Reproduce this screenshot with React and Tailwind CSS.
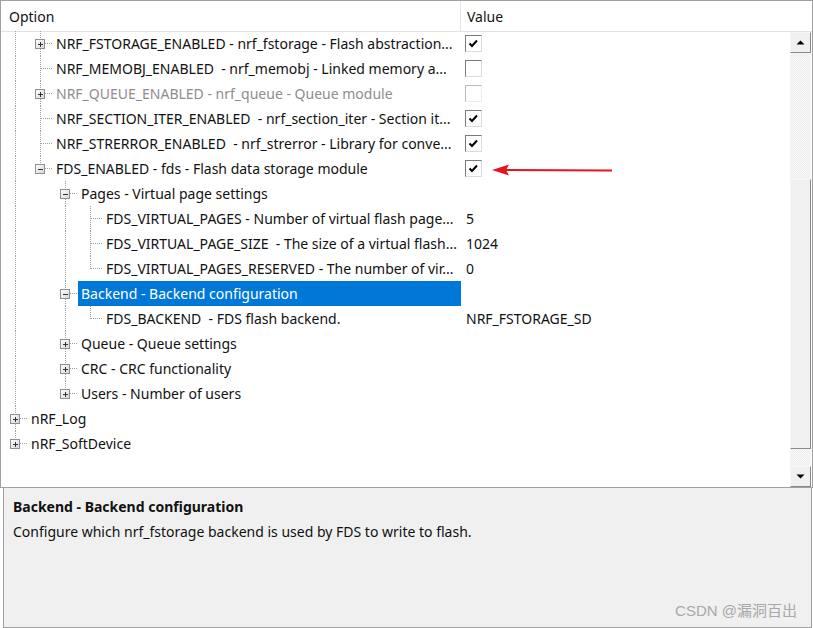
import React from 'react';

const rows = [
  { guides: ['v', 'T'], exp: '+', text: 'NRF_FSTORAGE_ENABLED - nrf_fstorage - Flash abstraction...', check: true },
  { guides: ['v', 'T'], text: 'NRF_MEMOBJ_ENABLED  - nrf_memobj - Linked memory a...', check: false },
  { guides: ['v', 'T'], exp: '+', text: 'NRF_QUEUE_ENABLED - nrf_queue - Queue module', check: false, disabled: true },
  { guides: ['v', 'T'], text: 'NRF_SECTION_ITER_ENABLED  - nrf_section_iter - Section it...', check: true },
  { guides: ['v', 'T'], text: 'NRF_STRERROR_ENABLED  - nrf_strerror - Library for conve...', check: true },
  { guides: ['v', 'L'], exp: '-', text: 'FDS_ENABLED - fds - Flash data storage module', check: true },
  { guides: ['v', ' ', 'T'], exp: '-', text: 'Pages - Virtual page settings' },
  { guides: ['v', ' ', 'v', 'T'], text: 'FDS_VIRTUAL_PAGES - Number of virtual flash page...', value: '5' },
  { guides: ['v', ' ', 'v', 'T'], text: 'FDS_VIRTUAL_PAGE_SIZE  - The size of a virtual flash...', value: '1024' },
  { guides: ['v', ' ', 'v', 'L'], text: 'FDS_VIRTUAL_PAGES_RESERVED - The number of vir...', value: '0' },
  { guides: ['v', ' ', 'T'], exp: '-', text: 'Backend - Backend configuration', selected: true },
  { guides: ['v', ' ', 'v', 'L'], text: 'FDS_BACKEND  - FDS flash backend.', value: 'NRF_FSTORAGE_SD' },
  { guides: ['v', ' ', 'T'], exp: '+', text: 'Queue - Queue settings' },
  { guides: ['v', ' ', 'T'], exp: '+', text: 'CRC - CRC functionality' },
  { guides: ['v', ' ', 'L'], exp: '+', text: 'Users - Number of users' },
  { guides: ['T'], exp: '+', text: 'nRF_Log' },
  { guides: ['L'], exp: '+', text: 'nRF_SoftDevice' },
];

const Guide = ({ type, exp }) => (
  <svg width="25" height="25" viewBox="0 0 25 25" className="shrink-0" shapeRendering="crispEdges">
    {(type === 'v' || type === 'T') && (
      <line x1="12.5" y1="0" x2="12.5" y2="25" stroke="#a0a0a0" strokeDasharray="1 1" />
    )}
    {type === 'L' && <line x1="12.5" y1="0" x2="12.5" y2="13" stroke="#a0a0a0" strokeDasharray="1 1" />}
    {(type === 'T' || type === 'L') && (
      <line x1="13" y1="12.5" x2="25" y2="12.5" stroke="#a0a0a0" strokeDasharray="1 1" />
    )}
    {exp && (
      <g>
        <defs>
          <linearGradient id="expg" x1="0" y1="0" x2="1" y2="1">
            <stop offset="0" stopColor="#ffffff" />
            <stop offset="1" stopColor="#d6d6d6" />
          </linearGradient>
        </defs>
        <rect x="7.5" y="8.5" width="9" height="9" fill="url(#expg)" stroke="#8e8f8f" />
        <line x1="10" y1="13" x2="15" y2="13" stroke="#333" />
        {exp === '+' && <line x1="12.5" y1="10.5" x2="12.5" y2="15.5" stroke="#333" />}
      </g>
    )}
  </svg>
);

const Checkbox = ({ checked, disabled }) => (
  <span
    className={`ml-[4px] flex h-[17px] w-[17px] items-start border border-t-[#7a7a7a] border-l-[#7a7a7a] border-r-[#dcdcdc] border-b-[#dcdcdc] bg-white ${
      disabled ? 'opacity-50' : ''
    }`}
  >
    {checked && (
      <svg width="11" height="10" viewBox="0 0 11 10" className="ml-[2px] mt-[3px]">
        <path d="M1.5 4.5 L4 7 L9 1.5" fill="none" stroke="#000" strokeWidth="2" />
      </svg>
    )}
  </span>
);

const ScrollButton = ({ up }) => (
  <div className="flex h-[21px] items-center justify-center border border-t-[#f7f7f7] border-l-[#f7f7f7] border-r-[#8a8a8a] border-b-[#8a8a8a] bg-[#f0f0f0]">
    <svg width="9" height="5" viewBox="0 0 9 5">
      <path d={up ? 'M0.5 4.5 L4.5 0.5 L8.5 4.5 Z' : 'M0.5 0.5 L4.5 4.5 L8.5 0.5 Z'} fill="#000" />
    </svg>
  </div>
);

export default function App() {
  return (
    <div className="relative flex h-[628px] w-[813px] flex-col bg-white font-['Noto_Sans','Open_Sans',sans-serif] text-[14px] text-[#111]">
      <div className="flex h-[488px] flex-col border border-[#a0a0a0]">
        <div className="flex h-[31px] shrink-0 items-center border-b border-[#e3e3e3]">
          <div className="flex h-full w-[460px] items-center border-r border-[#e3e3e3] pl-[8px]">Option</div>
          <div className="pl-[6px]">Value</div>
        </div>
        <div className="flex flex-1">
          <div className="-mt-[1px] flex-1">
            {rows.map((r) => (
              <div key={r.text} className="flex h-[25px] items-center">
                <div className="flex h-full w-[460px] items-center overflow-hidden pl-[2px]">
                  {r.guides.map((g, i) => (
                    <Guide key={i} type={g} exp={i === r.guides.length - 1 ? r.exp : undefined} />
                  ))}
                  <span
                    className={`flex h-full flex-1 items-center whitespace-pre pl-[3px] ${
                      r.selected ? 'bg-[#0078d7] text-white' : r.disabled ? 'text-[#8d8d8d]' : ''
                    }`}
                  >
                    {r.text}
                  </span>
                </div>
                <div className="flex flex-1 items-center">
                  {r.check !== undefined && <Checkbox checked={r.check} disabled={r.disabled} />}
                  {r.value && <span className="pl-[5px]">{r.value}</span>}
                </div>
              </div>
            ))}
          </div>
          <div className="mr-[1px] flex w-[21px] flex-col">
            <ScrollButton up />
            <div className="flex flex-1 flex-col bg-[repeating-conic-gradient(#ececec_0_25%,#fafafa_0_50%)] bg-[length:2px_2px]">
              <div className="h-[126px]" />
              <div className="h-[270px] border border-t-[#f7f7f7] border-l-[#f7f7f7] border-r-[#8a8a8a] border-b-[#8a8a8a] bg-[#f0f0f0]" />
            </div>
            <ScrollButton />
          </div>
        </div>
      </div>
      <div className="ml-[3px] mr-[1px] flex-1 border border-t-0 border-[#a0a0a0] bg-[#f0f0f0] px-[9px] pt-[8px]">
        <div className="font-bold">Backend - Backend configuration</div>
        <div className="mt-[4px]">Configure which nrf_fstorage backend is used by FDS to write to flash.</div>
      </div>
      <div className="absolute bottom-[6px] right-[16px] font-['Liberation_Sans','Noto_Sans_CJK_SC',sans-serif] text-[15px] text-[#a8a8a8]">
        CSDN @漏洞百出
      </div>
      <svg className="absolute left-[490px] top-[162px]" width="126" height="16" viewBox="0 0 126 16">
        <path d="M2 8 L19 2.5 L16 8 L19 13.5 Z" fill="#e8141b" />
        <line x1="15" y1="8" x2="122" y2="8.5" stroke="#e8141b" strokeWidth="2.2" />
      </svg>
    </div>
  );
}
